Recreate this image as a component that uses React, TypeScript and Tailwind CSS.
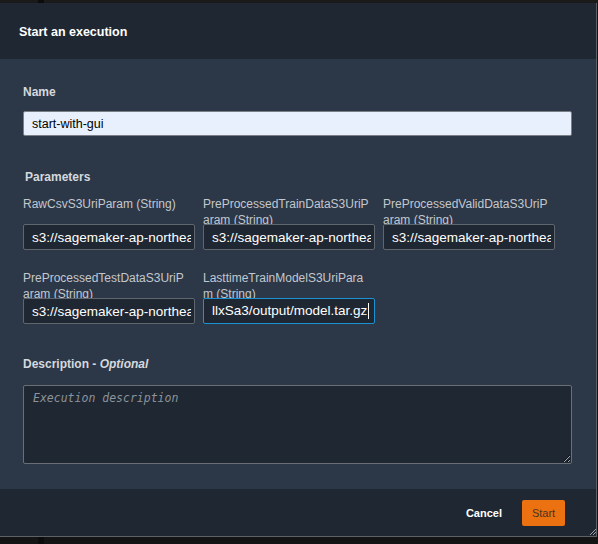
import React from 'react';

const params = [
  { label: ['RawCsvS3UriParam (String)'], value: 's3://sagemaker-ap-northeast-1-123456789012/raw/data.csv' },
  { label: ['PreProcessedTrainDataS3UriP', 'aram (String)'], value: 's3://sagemaker-ap-northeast-1-123456789012/train' },
  { label: ['PreProcessedValidDataS3UriP', 'aram (String)'], value: 's3://sagemaker-ap-northeast-1-123456789012/valid' },
  { label: ['PreProcessedTestDataS3UriP', 'aram (String)'], value: 's3://sagemaker-ap-northeast-1-123456789012/test' },
];

function ParamField({ label, value, focused }: { label: string[]; value: string; focused?: boolean }) {
  return (
    <div className="flex flex-col">
      <div className="h-[28px] text-[12px] leading-[16px] text-[#c3c8ce] whitespace-nowrap">
        {label.map((l) => (
          <div key={l}>{l}</div>
        ))}
      </div>
      {focused ? (
        <div className="relative h-[26px] flex items-center overflow-hidden rounded-[2px] border border-[#1b93d2] bg-[#1f2732] pl-[8px] text-[13.5px] text-white whitespace-nowrap">
          {value}
          <span className="ml-[1px] inline-block h-[16px] w-[1px] bg-white" />
        </div>
      ) : (
        <input
          readOnly
          value={value}
          className="relative h-[26px] w-full rounded-[2px] border border-[#5f666e] bg-[#1f2732] pl-[8px] pr-[3px] text-[13.5px] text-white outline-none"
        />
      )}
    </div>
  );
}

export default function App() {
  return (
    <div
      className="relative flex h-[544px] w-[598px] flex-col overflow-hidden bg-[#141414]"
      style={{ fontFamily: '"Liberation Sans", Arial, sans-serif' }}
    >
      <div className="relative h-[3px] bg-[#1a1a1a]">
        <div className="absolute left-[38px] top-0 h-[3px] w-[6px] bg-[#0c0c0c]" />
      </div>

      <div className="flex w-[597px] flex-col border-r border-b border-[#5d6269]">
        {/* header */}
        <div className="flex h-[56px] items-center bg-[#1f2732] px-[19px] pt-[3px]">
          <h2 className="text-[12.5px] font-bold text-white">Start an execution</h2>
        </div>

        {/* body */}
        <div className="flex h-[430px] flex-col bg-[#2c3747] px-[23px] pt-[26px]">
          <label className="h-[14px] text-[12px] font-bold leading-[14px] text-[#d5d9de]">Name</label>
          <input
            readOnly
            value="start-with-gui"
            className="mt-[12px] h-[25px] w-[549px] rounded-[2px] border border-[#7a7f86] bg-[#e8f0fe] px-[8px] text-[12.5px] text-black outline-none"
          />

          <div className="ml-[2px] mt-[34px] h-[14px] text-[12px] font-bold leading-[14px] text-[#d5d9de]">Parameters</div>

          <div className="mt-[12px] grid grid-cols-[172px_172px_172px] gap-x-2 gap-y-5">
            {params.map((p) => (
              <ParamField key={p.label[0]} label={p.label} value={p.value} />
            ))}
            <ParamField label={['LasttimeTrainModelS3UriPara', 'm (String)']} value="llxSa3/output/model.tar.gz" focused />
          </div>

          <div className="mt-[33px] h-[14px] text-[12px] font-bold leading-[14px] text-[#d5d9de]">
            Description - <i>Optional</i>
          </div>
          <textarea
            readOnly
            placeholder="Execution description"
            className="mt-[14px] h-[79px] w-[549px] rounded-[2px] border border-[#6a6f76] bg-[#1f2732] px-[9px] pt-[4px] text-[11.5px] italic text-white outline-none placeholder:text-[#8c939b]"
            style={{ fontFamily: '"DejaVu Sans Mono", monospace', colorScheme: 'dark' }}
          />
        </div>

        {/* footer */}
        <div className="flex h-[47px] items-center justify-end gap-[20px] bg-[#1f2732] pr-[31px] pt-[1px]">
          <button className="text-[11px] font-bold text-white">Cancel</button>
          <button className="h-[26px] w-[43px] rounded-[2px] bg-[#ec7211] text-[11px] text-[#4a3420]">Start</button>
        </div>
      </div>

      <div className="relative flex-1 bg-[#141414]">
        <div className="absolute left-[38px] top-0 h-full w-[6px] bg-[#0c0c0c]" />
      </div>

      <svg className="absolute left-[588px] top-[527px]" width="9" height="9" viewBox="0 0 9 9">
        <path d="M8 2 L2 8 M8 5 L5 8" stroke="#9aa0a6" strokeWidth="1" />
      </svg>
    </div>
  );
}
